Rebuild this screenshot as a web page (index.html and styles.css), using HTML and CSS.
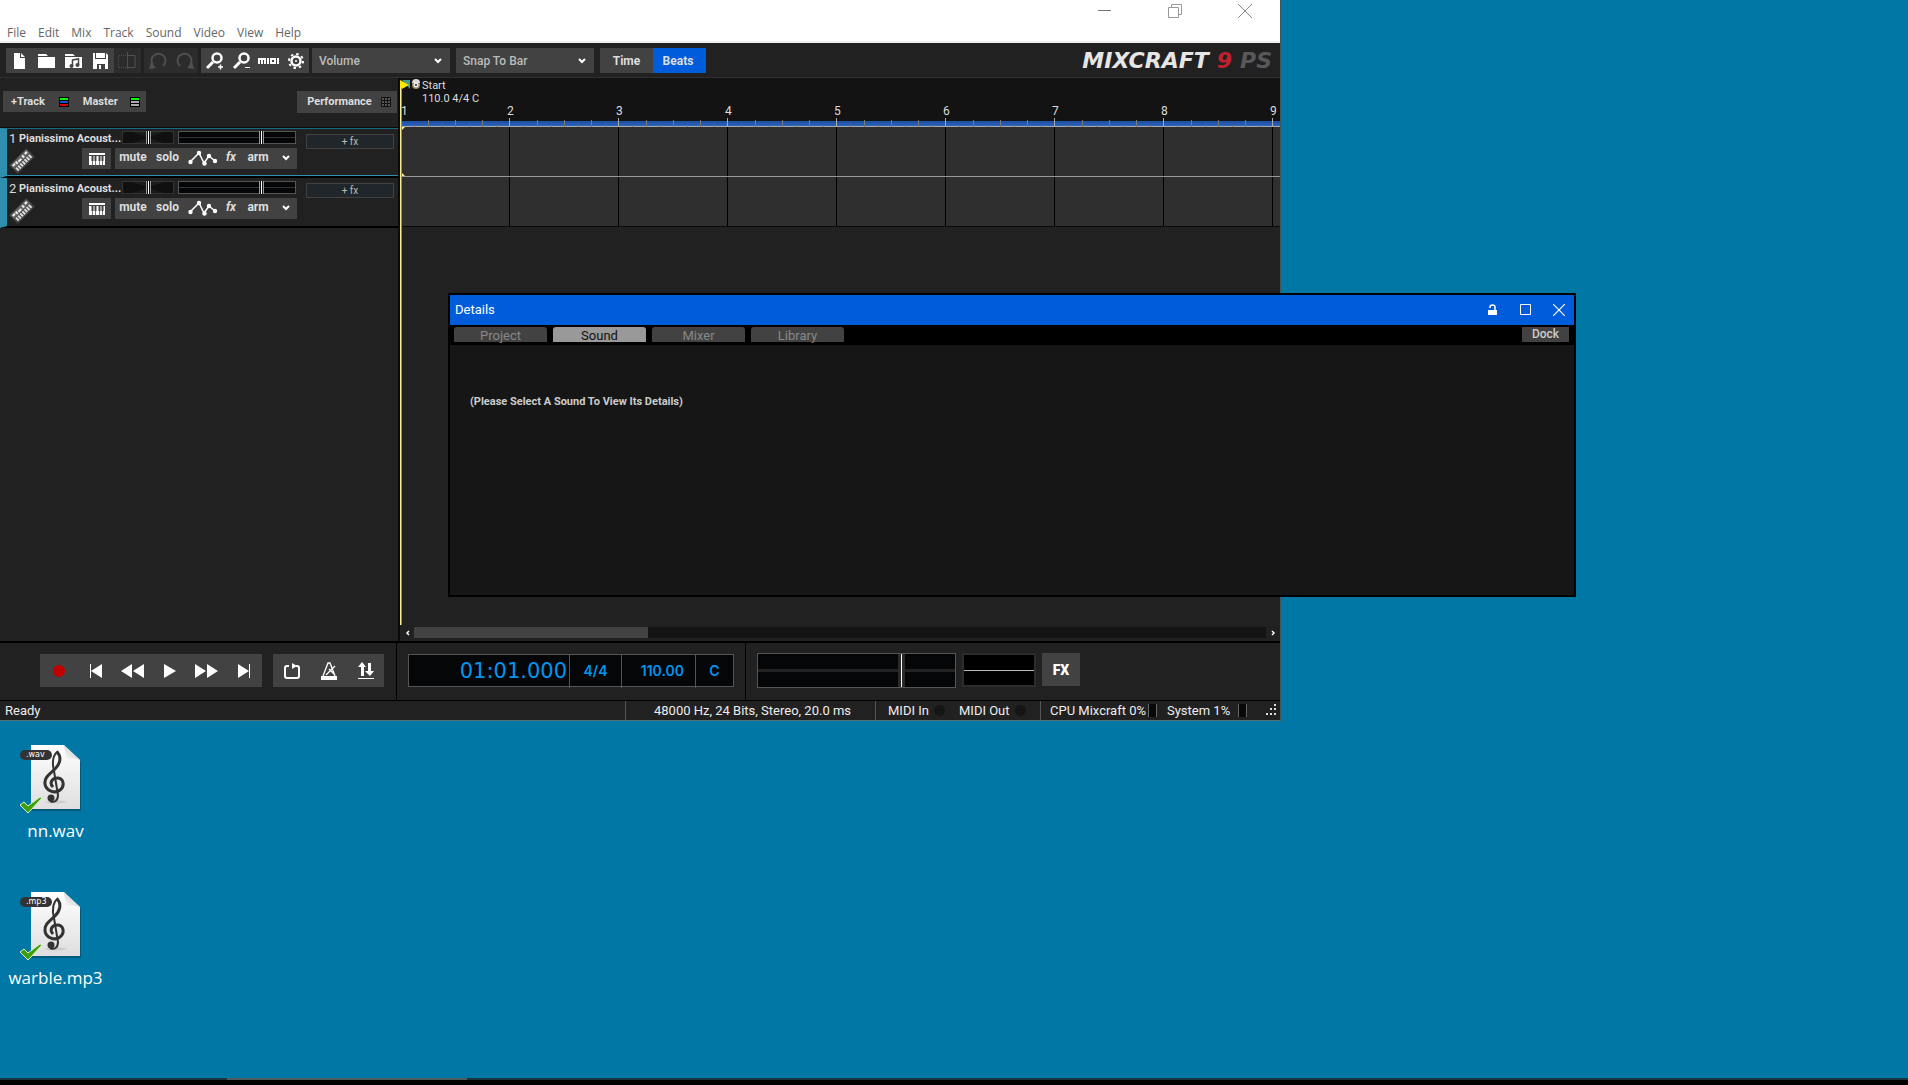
FILE: index.html
```html
<!DOCTYPE html>
<html lang="en">
<head>
<meta charset="utf-8">
<title>Mixcraft 9 Pro Studio</title>
<link rel="stylesheet" href="styles.css">
</head>
<body>
<svg class="defs" width="0" height="0" aria-hidden="true">
  <defs>
    <linearGradient id="paper" x1="0" y1="0" x2="0" y2="1"><stop offset="0" stop-color="#fff"/><stop offset="1" stop-color="#dedede"/></linearGradient>
    <linearGradient id="curl" x1="0" y1="1" x2="1" y2="0"><stop offset="0" stop-color="#fff"/><stop offset=".5" stop-color="#ddd"/><stop offset="1" stop-color="#777"/></linearGradient>
    <symbol id="audio-file" viewBox="0 0 64 70">
      <path d="M12 2h33l16 16v49H12z" fill="#045a7c"/>
      <path d="M11 1h33l16 15v49H11z" fill="url(#paper)"/>
      <path d="M43 1l17 15c-5-2-11-2-15-1 1-5 0-10-2-14z" fill="url(#curl)"/>
      <ellipse cx="36" cy="58" rx="11" ry="1.500" fill="#ccc"/>
      <path d="M37 8c5 5 3 12-2 17-5 5-11 8-10 15 1 7 10 10 15 6 5-4 4-12-3-12-5 0-8 5-4 9" fill="none" stroke="#333" stroke-width="3"/>
      <path d="M38 7c-6 5-6 12-4 20l4 24c0 6-4 8-8 6" fill="none" stroke="#333" stroke-width="2"/>
      <circle cx="31" cy="54" r="3.500" fill="#333"/>
      <rect x="0" y="6" width="32" height="10" rx="5" fill="#333"/>
      <path d="M0 61l4-3 4 4 12-9 2 1-14 15z" fill="#3f9e0c" stroke="#d9f0c8"/>
    </symbol>
    <symbol id="keyboard" viewBox="0 0 26 26">
      <g transform="rotate(-45 13 13)"><rect x="1" y="7" width="24" height="12" fill="#454545"/><rect x="2" y="8" width="22" height="5" fill="#666"/><path d="M3 10h3M8 9v3M10 11h4M17 9v3M20 10h3" stroke="#eee" stroke-width="2"/><path d="M3 15.500h20" stroke="#ddd" stroke-width="4" stroke-dasharray="2 1"/></g>
    </symbol>
    <symbol id="piano" viewBox="0 0 16 12"><path d="M0 0h16v2H0zM0 3h16v9H0z" fill="#fff"/><path d="M3.500 3v5M6.500 3v5M10.500 3v5M13.500 3v5" stroke="#424242" stroke-width="2"/><path d="M3.500 8v4M6.500 8v4M10.500 8v4M13.500 8v4" stroke="#777"/></symbol>
    <symbol id="envelope" viewBox="0 0 30 16"><path d="M2 12L11 3l5 10 5-7 6 5" fill="none" stroke="#fff" stroke-width="1.500"/><circle cx="2.500" cy="12" r="2.200" fill="#fff"/><circle cx="11" cy="3" r="2.200" fill="#fff"/><circle cx="16.500" cy="13.500" r="2.200" fill="#fff"/><circle cx="21" cy="6" r="2.200" fill="#fff"/><circle cx="27" cy="11" r="2.200" fill="#fff"/></symbol>
    <symbol id="chevron" viewBox="0 0 8 6"><path d="M1 1l3 3 3-3" fill="none" stroke="#fff" stroke-width="2"/></symbol>
  </defs>
</svg>

<main class="desktop">
  <section class="app" aria-label="Mixcraft">
    <header class="titlebar">
      <div class="caption">
        <button aria-label="Minimize"><svg width="14" height="14"><path d="M0 6.500h13" stroke="#777"/></svg></button>
        <button aria-label="Restore"><svg width="14" height="14" fill="none" stroke="#999"><path d="M.5 3.500h10v10H.5zM3.500 3V.5h10v10H11"/></svg></button>
        <button aria-label="Close"><svg width="14" height="14" stroke="#888"><path d="M0 0l14 14M14 0L0 14"/></svg></button>
      </div>
      <nav class="menu">
        <button>File</button><button>Edit</button><button>Mix</button><button>Track</button><button>Sound</button><button>Video</button><button>View</button><button>Help</button>
      </nav>
    </header>

    <div class="toolbar">
      <div class="group">
        <button aria-label="New"><svg width="18" height="18"><path d="M4 1h6v5h5v11H4zM11 1l4 4h-4z" fill="#fff"/></svg></button>
        <button aria-label="Open"><svg width="18" height="18"><path d="M1 2h8l2 2H1zM1 5h17v11H1z" fill="#fff"/></svg></button>
        <button aria-label="Open library"><svg width="18" height="18"><path d="M1 2h8l2 2H1zM1 5h17v11H1z" fill="#fff"/><path d="M8.500 14V8l6-1v6" fill="none" stroke="#444" stroke-width="1.500"/><circle cx="7.500" cy="14" r="2" fill="#444"/><circle cx="13.500" cy="13" r="2" fill="#444"/></svg></button>
        <button aria-label="Save"><svg width="18" height="18"><path d="M2 1h2v6h11V1l2 2v14h-3v-5H6v5H2zM5 1h9v5H5zM8 13h2v4H8z" fill="#fff"/></svg></button>
        <button aria-label="Split" class="off"><svg width="18" height="18" fill="none" stroke="#505050"><path d="M9.500 0v17M10 3.500h7v12h-7"/><path d="M8 3.500H.5v12H8" stroke-dasharray="1 1"/></svg></button>
      </div>
      <div class="group">
        <button aria-label="Undo" class="off"><svg width="18" height="18"><path d="M4 13A7 7 0 1 1 14 14" fill="none" stroke="#505050" stroke-width="2"/><path d="M0 17l2-7 5 6z" fill="#505050"/></svg></button>
        <button aria-label="Redo" class="off"><svg width="18" height="18"><path d="M14 13A7 7 0 1 0 4 14" fill="none" stroke="#505050" stroke-width="2"/><path d="M18 17l-2-7-5 6z" fill="#505050"/></svg></button>
      </div>
      <div class="group">
        <button aria-label="Zoom in"><svg width="18" height="18" fill="none" stroke="#fff"><circle cx="11" cy="6" r="4.500" stroke-width="2.500"/><path d="M7 10l-6 6" stroke-width="3"/><path d="M12 15h5M14.500 12.500v5" stroke-width="1.500"/></svg></button>
        <button aria-label="Zoom out"><svg width="18" height="18" fill="none" stroke="#fff"><circle cx="11" cy="6" r="4.500" stroke-width="2.500"/><path d="M7 10l-6 6" stroke-width="3"/><path d="M12 15.500h5"/></svg></button>
        <button aria-label="MIDI"><svg width="22" height="8" fill="none" stroke="#fff" stroke-width="2"><path d="M1 7V2h6v5M4 2v5M10 1v6M12 2h5v4h-4V3M20 1v6"/></svg></button>
        <button aria-label="Preferences"><svg width="18" height="18" fill="none" stroke="#fff"><circle cx="9" cy="9" r="4.500" stroke-width="2.500"/><circle cx="9" cy="9" r="7" stroke-width="2" stroke-dasharray="2.500 3"/><circle cx="9" cy="9" r="1" fill="#fff" stroke="none"/></svg></button>
      </div>
      <label class="drop"><select aria-label="Automation"><option>Volume</option></select><svg width="8" height="6"><use href="#chevron"/></svg></label>
      <label class="drop"><select aria-label="Snap"><option>Snap To Bar</option></select><svg width="8" height="6"><use href="#chevron"/></svg></label>
      <div class="switch"><button>Time</button><button class="on">Beats</button></div>
      <div class="logo"><span>MIXCRAFT</span><span class="nine">9</span><span class="ps">PS</span></div>
    </div>

    <div class="workspace">
      <aside class="tracks">
        <div class="tracks-head">
          <div class="pair">
            <button>+Track <svg width="10" height="10"><path d="M0 0h10v10H0z"/><path d="M1 1h8v2H1z" fill="#0f0"/><path d="M1 4h8v2H1z" fill="#15c"/><path d="M1 7h8v2H1z" fill="#d00"/></svg></button>
            <button>Master <svg width="10" height="10"><path d="M0 0h10v10H0z"/><path d="M1 1h8v2H1z" fill="#0f0"/><path d="M1 4h8v2H1zM1 7h8v2H1z" fill="#aaa"/></svg></button>
          </div>
          <button class="perf">Performance <svg width="10" height="10" fill="#555" stroke="#111"><path d="M.5 .5h9v9h-9zM3.500 0v10M6.500 0v10M0 3.500h10M0 6.500h10"/></svg></button>
        </div>

        <article class="track selected">
          <div class="track-main">
            <div class="track-top">
              <span class="num">1</span><span class="name">Pianissimo Acoust...</span>
              <div class="pan"><i></i></div><div class="vol"><i></i></div>
            </div>
            <div class="track-bottom">
              <svg class="inst" width="26" height="26"><use href="#keyboard"/></svg>
              <button class="keys" aria-label="Instrument"><svg width="16" height="12"><use href="#piano"/></svg></button>
              <div class="strip"><button>mute</button><button>solo</button><button aria-label="Automation"><svg width="30" height="16"><use href="#envelope"/></svg></button><button><em>fx</em></button><button>arm</button><button aria-label="More"><svg width="8" height="6"><use href="#chevron"/></svg></button></div>
            </div>
          </div>
          <button class="addfx">+ fx</button>
        </article>

        <article class="track">
          <div class="track-main">
            <div class="track-top">
              <span class="num">2</span><span class="name">Pianissimo Acoust...</span>
              <div class="pan"><i></i></div><div class="vol"><i></i></div>
            </div>
            <div class="track-bottom">
              <svg class="inst" width="26" height="26"><use href="#keyboard"/></svg>
              <button class="keys" aria-label="Instrument"><svg width="16" height="12"><use href="#piano"/></svg></button>
              <div class="strip"><button>mute</button><button>solo</button><button aria-label="Automation"><svg width="30" height="16"><use href="#envelope"/></svg></button><button><em>fx</em></button><button>arm</button><button aria-label="More"><svg width="8" height="6"><use href="#chevron"/></svg></button></div>
            </div>
          </div>
          <button class="addfx">+ fx</button>
        </article>
      </aside>

      <div class="timeline">
        <div class="marker">
          <svg width="20" height="12"><path d="M2 1h8v9z" fill="#4a9b95"/><path d="M0 1l9 5-9 5z" fill="#ffe800"/><circle cx="16" cy="6" r="4" fill="#a58a62"/><path d="M12 4a4 4 0 0 1 8 0z" fill="#ddd"/><circle cx="16" cy="6" r="2.500" fill="#eee"/><circle cx="16" cy="6" r="1" fill="#222"/></svg>
          <div>Start<br>110.0 4/4 C</div>
        </div>
        <div class="ruler">
          <div class="bar"><b>1</b><i></i><i></i><i></i><i></i></div>
          <div class="bar"><b>2</b><i></i><i></i><i></i><i></i></div>
          <div class="bar"><b>3</b><i></i><i></i><i></i><i></i></div>
          <div class="bar"><b>4</b><i></i><i></i><i></i><i></i></div>
          <div class="bar"><b>5</b><i></i><i></i><i></i><i></i></div>
          <div class="bar"><b>6</b><i></i><i></i><i></i><i></i></div>
          <div class="bar"><b>7</b><i></i><i></i><i></i><i></i></div>
          <div class="bar"><b>8</b><i></i><i></i><i></i><i></i></div>
          <div class="bar last"><b>9</b></div>
        </div>
        <div class="lane first"><svg width="5" height="49"><path d="M1 0h4L1 4zM1 45l4 4H1z" fill="#fff2a0"/></svg></div>
        <div class="lane"></div>
        <div class="playhead"></div>
        <div class="hscroll">
          <button aria-label="Scroll left"><svg width="5" height="6"><path d="M4 1L2 3l2 2" fill="none" stroke="#fff" stroke-width="1.500"/></svg></button>
          <div class="rail"><div class="thumb"></div></div>
          <button aria-label="Scroll right"><svg width="5" height="6"><path d="M1 1l2 2-2 2" fill="none" stroke="#fff" stroke-width="1.500"/></svg></button>
        </div>
      </div>
    </div>

    <div class="transport">
      <div class="controls">
        <div class="keyset">
          <button aria-label="Record"><svg width="14" height="14"><circle cx="7" cy="7" r="6" fill="#c00000"/></svg></button>
          <button aria-label="Start"><svg width="14" height="14" fill="#fff"><path d="M1 0h1v14H1zM13 0v14L2 7z"/></svg></button>
          <button aria-label="Rewind"><svg width="23" height="14" fill="#fff"><path d="M11 0v14L0 7zM23 0v14L12 7z"/></svg></button>
          <button aria-label="Play"><svg width="12" height="14" fill="#fff"><path d="M0 0l12 7-12 7z"/></svg></button>
          <button aria-label="Forward"><svg width="23" height="14" fill="#fff"><path d="M0 0l11 7-11 7zM12 0l11 7-11 7z"/></svg></button>
          <button aria-label="End"><svg width="14" height="14" fill="#fff"><path d="M12 0h1v14h-1zM1 0l11 7-11 7z"/></svg></button>
        </div>
        <div class="keyset">
          <button aria-label="Loop"><svg width="16" height="18"><path d="M5 4H3Q1 4 1 6v8q0 2 2 2h10q2 0 2-2V6q0-2-2-2h-1" fill="none" stroke="#fff" stroke-width="2"/><path d="M8 1l5 3-5 3z" fill="#fff"/></svg></button>
          <button aria-label="Metronome"><svg width="16" height="20"><path d="M2 15L7 2h2l5 13M5 14l9-9M8 8l6 6" fill="none" stroke="#fff" stroke-width="1.300"/><path d="M0 15h16v4H0z" fill="#fff"/></svg></button>
          <button aria-label="Punch"><svg width="16" height="18" fill="#fff"><path d="M4 0l4 5H6v9H3V5H0zM10 1h3v8h3l-4 5-5-5h3zM0 16h16v1H0z"/></svg></button>
        </div>
      </div>
      <div class="display">
        <div class="lcd"><span class="pos">01:01.000</span><span class="sig">4/4</span><span class="tempo">110.00</span><span class="key">C</span></div>
      </div>
      <div class="output">
        <div class="master-vol"><i></i></div>
        <div class="master-pan"></div>
        <button class="fx">FX</button>
      </div>
    </div>

    <footer class="status">
      <span class="ready">Ready</span>
      <span class="format">48000 Hz, 24 Bits, Stereo, 20.0 ms</span>
      <span class="midi">MIDI In <i></i></span><span class="midi2">MIDI Out <i></i></span>
      <span class="cpu">CPU Mixcraft 0% <i></i></span><span class="sys">System 1% <i></i></span>
      <svg width="12" height="12" fill="#ddd"><path d="M9 0h2v2H9zM5 4h2v2H5zM9 4h2v2H9zM1 9h2v2H1zM5 9h2v2H5zM9 9h2v2H9z"/></svg>
    </footer>
  </section>

  <section class="details" aria-label="Details">
    <header>
      <h2>Details</h2>
      <button aria-label="Lock"><svg width="12" height="12"><path d="M3 4V3q0-2 2.500-2T8 3v3" fill="none" stroke="#fff" stroke-width="1.500"/><path d="M1 6h9v5H1z" fill="#fff"/></svg></button>
      <button aria-label="Maximize"><svg width="12" height="12"><path d="M.5 .5h10v10H.5z" fill="none" stroke="#fff"/></svg></button>
      <button aria-label="Close"><svg width="12" height="12" stroke="#fff" stroke-width="1.200"><path d="M0 0l12 12M12 0L0 12"/></svg></button>
    </header>
    <div class="tabs">
      <button>Project</button><button class="on">Sound</button><button>Mixer</button><button>Library</button>
      <button class="dock">Dock</button>
    </div>
    <p>(Please Select A Sound To View Its Details)</p>
  </section>

  <ul class="files">
    <li><div class="thumbnail"><svg width="64" height="70"><use href="#audio-file"/></svg><span>.wav</span></div>nn.wav</li>
    <li><div class="thumbnail"><svg width="64" height="70"><use href="#audio-file"/></svg><span>.mp3</span></div>warble.mp3</li>
  </ul>
</main>
<div class="taskbar"><i></i></div>
</body>
</html>
```
FILE: styles.css
```css
* { box-sizing: border-box; }
body {
  margin: 0;
  height: 100vh;
  display: flex;
  flex-direction: column;
  overflow: hidden;
  background: #0077a4;
  color: #ddd;
  font: 12px/14px Roboto, sans-serif;
}
button {
  border: 0;
  padding: 0;
  background: none;
  color: inherit;
  font: inherit;
  display: flex;
  align-items: center;
  justify-content: center;
}
svg { display: block; flex: none; }
.defs { position: absolute; }
.desktop { flex: 1; position: relative; min-height: 0; }

/* Application window */
.app {
  position: absolute;
  inset: 0 627px auto 0;
  height: calc(100vh - 364px);
  display: flex;
  flex-direction: column;
  background: #212121;
  border-right: 1px solid #3c5660;
  border-bottom: 1px solid #56707a;
}
.titlebar {
  height: 43px;
  background: #fff;
  border-bottom: 2px solid #eff0ef;
}
.caption {
  display: flex;
  justify-content: flex-end;
  gap: 56px;
  height: 22px;
  padding-right: 28px;
}
.menu {
  display: flex;
  gap: 12px;
  padding-left: 7px;
  color: #666;
  font: 12px/21px "Open Sans", sans-serif;
}
.toolbar {
  height: 35px;
  padding: 5px 8px 4px 6px;
  display: flex;
  border-bottom: 1px solid #303030;
}
.group { display: flex; margin-right: 3px; }
.group button { width: 27px; background: #424242; }
.group:first-child button { padding-right: 1px; }
.group .off { background: #2c2c2c; }
.drop {
  width: 138px;
  margin-right: 6px;
  background: #424242;
  display: flex;
  align-items: center;
  padding-right: 8px;
}
.drop select {
  flex: 1;
  appearance: none;
  border: 0;
  background: none;
  padding: 2px 0 0 7px;
  color: #bbb;
  font: 500 12px/23px Roboto, sans-serif;
}
.switch { display: flex; font-weight: 700; }
.switch button { width: 53px; background: #424242; }
.switch .on { background: #005cda; padding-right: 3px; }
.logo {
  margin-left: auto;
  display: flex;
  gap: 8px;
  color: #e6e6e6;
  font: italic 700 22px/25px "DejaVu Sans", sans-serif;
}
.nine { color: #c2202f; }
.ps { color: #58585b; }

/* Track list */
.workspace { flex: 1; display: flex; min-height: 0; }
.tracks { width: 400px; border-right: 2px solid #0a0a0a; }
.tracks-head {
  height: 50px;
  padding: 13px 1px 0 3px;
  display: flex;
  justify-content: space-between;
  align-items: flex-start;
  font: 700 11px/14px Roboto, sans-serif;
  border-bottom: 1px solid #0a0a0a;
}
.pair { display: flex; height: 21px; padding: 0 6px 0 8px; gap: 14px; background: #424242; }
.pair button { gap: 14px; }
.pair button + button { gap: 12px; }
.perf { width: 100px; height: 22px; gap: 9px; padding-left: 4px; background: #424242; }
.track {
  height: 50px;
  display: flex;
  align-items: flex-start;
  border-left: 7px solid #2e90ae;
  border-bottom: 2px solid #000;
}
.selected { border-top: 1px solid #166b82; box-shadow: inset 0 -1px #2e90ae; }
.selected .track-main { padding-top: 2px; }
.track-main { width: 290px; padding-top: 3px; }
.track-top { display: flex; height: 17px; }
.num { width: 12px; padding-left: 2px; font: 13px/16px Roboto, sans-serif; }
.name { width: 103px; font: 700 11px/16px Roboto, sans-serif; white-space: nowrap; }
.pan, .vol { height: 13px; position: relative; }
.pan {
  width: 52px;
  margin-right: 4px;
  border: 1px solid #333;
  background: conic-gradient(from 70deg, #101010 40deg, #1c1c1c 0 180deg, #101010 0 220deg, #1c1c1c 0);
}
.vol { width: 118px; border: 1px solid #555; background: linear-gradient(#050607 5px, #333 5px 6px, #050607 6px); }
.pan i, .vol i {
  position: absolute;
  top: -1px;
  left: 23px;
  width: 5px;
  height: 13px;
  background: #fff;
  border: solid #999;
  border-width: 0 1px;
  box-shadow: inset 1px 0 #111, inset -1px 0 #111;
}
.vol i { left: 80px; }
.track-bottom { display: flex; height: 21px; }
.inst { margin: 0 47px 0 2px; }
.keys { width: 29px; margin-right: 4px; background: #424242; }
.strip {
  width: 182px;
  display: grid;
  grid-template-columns: 36px 33px 37px 20px 34px 22px;
  background: #424242;
  font-weight: 700;
  padding-bottom: 3px;
}
.strip button:nth-child(3), .strip button:last-child { padding-top: 2px; }
.addfx {
  width: 88px;
  height: 15px;
  margin: 5px 0 0 9px;
  border: 1px solid #424242;
  background: #20262a;
  font-size: 10px;
  color: #bbb;
}

/* Timeline */
.timeline { flex: 1; display: flex; flex-direction: column; position: relative; overflow: hidden; }
.marker { height: 29px; display: flex; background: #131313; font: 11px/13px Roboto, sans-serif; }
.marker svg { margin: 1px 2px 0 0; }
.marker div { padding-top: 1px; white-space: nowrap; }
.ruler {
  height: 20px;
  display: flex;
  background: linear-gradient(#131313 14px, #1b4f9f 14px, #2c63bd 19px, #aaa 19px);
}
.bar { flex: none; width: 109px; display: flex; flex-wrap: wrap; align-content: space-between; border-left: 1px solid transparent; border-image: linear-gradient(transparent 11px, #aaa 11px) 1; }
.bar b { width: 100%; height: 13px; margin: -2px 0 0 -3px; font: 12px/13px Roboto, sans-serif; }
.bar:first-child b { margin-left: 0; }
.last { width: 7px; align-content: flex-start; }
.bar i {
  width: 27px;
  height: 7px;
  background: linear-gradient(#777, #777) 13px 5px / 1px 2px no-repeat;
}
.bar i + i { border-left: 1px solid #777; }
.lane {
  height: 50px;
  border-bottom: 1px solid #0a0a0a;
  background: repeating-linear-gradient(90deg, #000 0 1px, #2f2f2f 1px 109px);
}
.first { border-bottom: 1px solid #999; }
.playhead {
  position: absolute;
  top: 10px;
  bottom: 16px;
  left: 0;
  width: 2px;
  background: #f5f08a;
  border-right: 1px solid #888;
}
.hscroll { height: 14px; margin-top: auto; padding-bottom: 3px; display: flex; }
.hscroll button { width: 14px; }
.rail { flex: 1; background: #141414; }
.thumb { width: 234px; height: 11px; background: #424242; }

/* Transport */
.transport { height: 60px; display: flex; border: solid #000; border-width: 2px 0 1px; }
.controls { width: 397px; padding: 11px 0 13px 40px; display: flex; gap: 11px; border-right: 1px solid #000; }
.keyset { display: flex; background: #424242; }
.keyset button { width: 37px; }
.display { width: 349px; padding: 11px; border-right: 1px solid #000; }
.lcd {
  height: 33px;
  display: grid;
  grid-template-columns: 160px 52px 74px 1fr;
  border: 1px solid #555;
  background: #050607;
  color: #0096f0;
  font: 600 14px/31px Inter, sans-serif;
  text-align: center;
}
.lcd span + span { border-left: 1px solid #555; }
.lcd .pos { font: 21px/33px "DejaVu Sans", sans-serif; text-align: right; padding-right: 2px; }
.lcd .tempo { text-align: right; padding-right: 11px; }
.output { flex: 1; display: flex; align-items: flex-start; padding: 10px 11px; gap: 6px; }
.master-vol {
  width: 199px;
  height: 35px;
  position: relative;
  border: 1px solid #555;
  background: linear-gradient(#050607 15px, #222 15px 18px, #050607 18px);
}
.master-vol i { position: absolute; top: 0; bottom: 0; left: 140px; width: 7px; background: #fff; border: solid #2a2a2a; border-width: 0 3px; }
.master-pan { width: 74px; height: 34px; border: 2px solid #2c2c2c; background: linear-gradient(#000 15px, #bbb 15px 16px, #000 16px); }
.fx { width: 38px; height: 33px; background: #424242; color: #fff; font: 900 14px/16px Roboto, sans-serif; }

/* Status bar */
.status { height: 19px; display: flex; align-items: stretch; color: #eee; font: 13px/18px Roboto, sans-serif; white-space: nowrap; }
.status span { display: flex; align-items: center; }
.ready { width: 625px; padding-left: 5px; }
.format { width: 250px; border-left: 1px solid #555; padding-left: 28px; }
.midi { width: 84px; border-left: 1px solid #555; padding-left: 12px; gap: 5px; }
.midi2 { width: 81px; gap: 5px; }
.cpu { width: 127px; border-left: 1px solid #555; padding-left: 9px; gap: 2px; }
.sys { gap: 8px; }
.midi i, .midi2 i { width: 11px; height: 11px; border-radius: 50%; background: #151515; }
.cpu i, .sys i { width: 9px; height: 13px; background: #080808; border: solid #666; border-width: 0 1px; }
.status svg { margin: 3px 3px 0 auto; }

/* Floating details window */
.details {
  position: absolute;
  inset: 293px 332px auto 448px;
  height: calc(100vh - 781px);
  border: 2px solid #000;
  background: #161616;
}
.details header { height: 30px; padding: 0 9px 0 5px; display: flex; align-items: center; gap: 21px; background: #005cda; }
.details h2 { margin: 0 auto 0 0; font: 13px/16px Roboto, sans-serif; color: #fff; }
.tabs { height: 20px; padding: 2px 5px 3px 4px; display: flex; gap: 6px; background: #000; color: #888; }
.tabs button { width: 93px; height: 15px; align-items: flex-start; border-radius: 3px 3px 0 0; background: #424242; font: 13px/18px Roboto, sans-serif; }
.tabs .on { background: #999; color: #111; }
.tabs .dock { width: 47px; margin-left: auto; border-radius: 0; color: #ccc; font: 500 12px/15px Roboto, sans-serif; }
.details p { margin: 50px 0 0 20px; color: #ccc; font: 700 11px/14px Roboto, sans-serif; }

/* Desktop files */
.files { list-style: none; position: absolute; left: 0; top: 744px; margin: 0; padding: 0; display: grid; gap: 50px; color: #fff; font: 17px/27px "Open Sans", sans-serif; text-align: center; }
.files li { width: 111px; height: 97px; }
.thumbnail { position: relative; padding-left: 20px; height: 73px; }
.thumbnail span { position: absolute; left: 26px; top: 5px; font: 8px/12px "DejaVu Sans", sans-serif; }

.taskbar { height: 7px; background: #000; border-top: 2px solid #183642; }
.taskbar i { display: block; width: 240px; height: 2px; margin: -2px 0 0 227px; background: #4c5c5e; }
```
